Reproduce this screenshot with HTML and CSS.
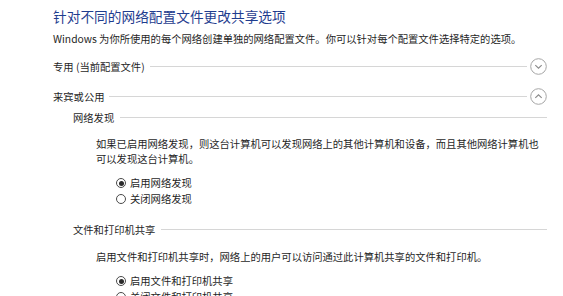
FILE: index.html
```html
<!DOCTYPE html>
<html lang="zh-CN">
<head>
<meta charset="utf-8">
<title>高级共享设置</title>
<link rel="stylesheet" href="styles.css">
</head>
<body>
<div class="page">
  <h1 class="title">针对不同的网络配置文件更改共享选项</h1>
  <p class="desc">Windows 为你所使用的每个网络创建单独的网络配置文件。你可以针对每个配置文件选择特定的选项。</p>

  <div class="section-head first">
    <span class="label">专用 (当前配置文件)</span>
    <span class="rule"></span>
    <span class="toggle">
      <svg width="17" height="17" viewBox="0 0 17 17"><circle cx="8.5" cy="8.5" r="7.8" fill="none" stroke="#a6a6a6" stroke-width="1"/><polyline points="5.3,7.2 8.5,10.2 11.7,7.2" fill="none" stroke="#8a8a8a" stroke-width="1.1"/></svg>
    </span>
  </div>

  <div class="section-head second">
    <span class="label">来宾或公用</span>
    <span class="rule"></span>
    <span class="toggle">
      <svg width="17" height="17" viewBox="0 0 17 17"><circle cx="8.5" cy="8.5" r="7.8" fill="none" stroke="#a6a6a6" stroke-width="1"/><polyline points="5.3,9.8 8.5,6.8 11.7,9.8" fill="none" stroke="#8a8a8a" stroke-width="1.1"/></svg>
    </span>
  </div>

  <div class="sub-head nd">
    <span class="label">网络发现</span>
    <span class="rule"></span>
  </div>
  <p class="para p1">如果已启用网络发现，则这台计算机可以发现网络上的其他计算机和设备，而且其他网络计算机也<br>可以发现这台计算机。</p>
  <div class="radios r1">
    <label class="radio"><span class="dot on"></span>启用网络发现</label>
    <label class="radio"><span class="dot"></span>关闭网络发现</label>
  </div>

  <div class="sub-head fs">
    <span class="label">文件和打印机共享</span>
    <span class="rule"></span>
  </div>
  <p class="para p2">启用文件和打印机共享时，网络上的用户可以访问通过此计算机共享的文件和打印机。</p>
  <div class="radios r2">
    <label class="radio"><span class="dot on"></span>启用文件和打印机共享</label>
    <label class="radio"><span class="dot"></span>关闭文件和打印机共享</label>
  </div>
</div>
</body>
</html>
```

FILE: styles.css
```css
html, body {
  margin: 0;
  padding: 0;
  background: #ffffff;
  overflow: hidden;
}

body {
  font-family: "Noto Sans CJK SC", "Noto Sans", sans-serif;
  color: #1f1f1f;
  font-size: 10.3px;
}

.page {
  width: 494px;
  padding-left: 53px;
}

.title {
  margin: 6px 0 0 0;
  font-size: 13.7px;
  line-height: 20px;
  font-weight: normal;
  color: #1f3d8f;
  letter-spacing: 0;
}

.desc {
  margin: 6px 0 0 0;
  line-height: 14px;
  white-space: nowrap;
}

.section-head {
  display: flex;
  align-items: center;
  height: 20px;
  margin-top: 10px;
}

.section-head .label {
  white-space: nowrap;
  margin-right: 5px;
}

.rule {
  flex: 1;
  height: 1px;
  background: #d6d6d6;
}

.toggle {
  display: flex;
  margin-left: 3px;
  width: 17px;
  height: 17px;
}

.sub-head {
  display: flex;
  align-items: center;
  height: 14px;
  margin-left: 20px;
}

.sub-head .label {
  white-space: nowrap;
  margin-right: 6px;
}

.sub-head.nd { margin-top: 4px; }
.sub-head.fs { margin-top: 15px; }

.para {
  margin: 12px 0 0 43px;
  line-height: 15px;
  white-space: nowrap;
}

.para.p2 { margin-top: 13px; }

.radios {
  margin: 9px 0 0 63px;
  display: flex;
  flex-direction: column;
}

.radio {
  display: flex;
  align-items: center;
  height: 16px;
  line-height: 16px;
  white-space: nowrap;
}

.dot {
  box-sizing: border-box;
  width: 10px;
  height: 10px;
  border: 1px solid #4a4a4a;
  border-radius: 50%;
  margin-right: 4px;
  position: relative;
  background: #fff;
}

.dot.on::after {
  content: "";
  position: absolute;
  left: 1.5px;
  top: 1.5px;
  width: 5px;
  height: 5px;
  border-radius: 50%;
  background: #2b2b2b;
}
```
